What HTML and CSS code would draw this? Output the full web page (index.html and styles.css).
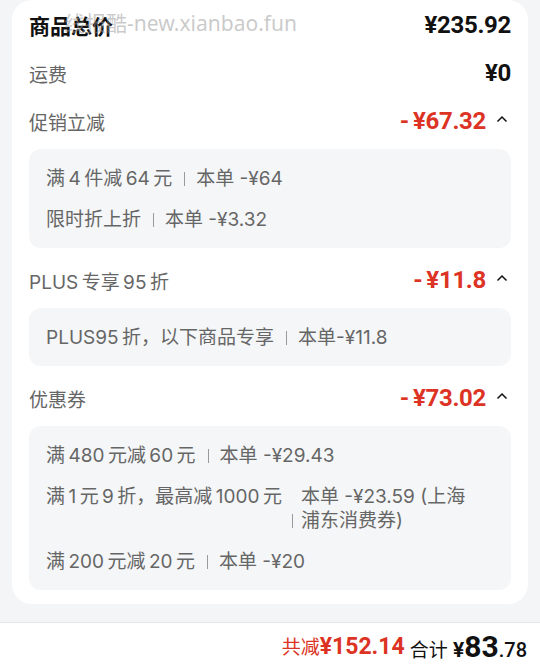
FILE: index.html
```html
<!DOCTYPE html>
<html lang="zh-CN">
<head>
<meta charset="utf-8">
<link rel="stylesheet" href="styles.css">
</head>
<body>
<div class="page">
  <div class="card">
    <div class="watermark">线报酷-new.xianbao.fun</div>
    <div class="row">
      <span class="title">商品总价</span>
      <span class="amt black">¥235.92</span>
    </div>
    <div class="row">
      <span class="label">运费</span>
      <span class="amt black">¥0</span>
    </div>

    <div class="row">
      <span class="label">促销立减</span>
      <span class="right"><span class="amt red"><span class="minus">-</span>¥67.32</span><svg class="chev" width="12" height="8" viewBox="0 0 12 8"><path d="M1.5 6.5 L6 2 L10.5 6.5" fill="none" stroke="#111" stroke-width="1.5"/></svg></span>
    </div>
    <div class="box">
      <div class="item"><span class="l">满&#8201;4&#8201;件减&#8201;64&#8201;元</span><span class="sep"></span><span class="r">本单 -¥64</span></div>
      <div class="item"><span class="l">限时折上折</span><span class="sep"></span><span class="r">本单 -¥3.32</span></div>
    </div>

    <div class="row">
      <span class="label">PLUS&#8201;专享&#8201;95&#8201;折</span>
      <span class="right"><span class="amt red"><span class="minus">-</span>¥11.8</span><svg class="chev" width="12" height="8" viewBox="0 0 12 8"><path d="M1.5 6.5 L6 2 L10.5 6.5" fill="none" stroke="#111" stroke-width="1.5"/></svg></span>
    </div>
    <div class="box">
      <div class="item"><span class="l">PLUS95&#8201;折，以下商品专享</span><span class="sep"></span><span class="r">本单-¥11.8</span></div>
    </div>

    <div class="row">
      <span class="label">优惠券</span>
      <span class="right"><span class="amt red"><span class="minus">-</span>¥73.02</span><svg class="chev" width="12" height="8" viewBox="0 0 12 8"><path d="M1.5 6.5 L6 2 L10.5 6.5" fill="none" stroke="#111" stroke-width="1.5"/></svg></span>
    </div>
    <div class="box">
      <div class="item"><span class="l">满&#8201;480&#8201;元减&#8201;60&#8201;元</span><span class="sep"></span><span class="r">本单 -¥29.43</span></div>
      <div class="item wrap"><span class="l">满&#8201;1&#8201;元&#8201;9&#8201;折，最高减&#8201;1000&#8201;元</span><span class="sep"></span><span class="r">本单 -¥23.59 (上海浦东消费券)</span></div>
      <div class="item"><span class="l">满&#8201;200&#8201;元减&#8201;20&#8201;元</span><span class="sep"></span><span class="r">本单 -¥20</span></div>
    </div>
  </div>
  <div class="footer">
    <span class="save">共减<b>¥152.14</b></span>
    <span class="total">合计 <span class="yen">¥</span><span class="big">83</span><span class="dec">.78</span></span>
  </div>
</div>
</body>
</html>
```

FILE: styles.css
```css
* { box-sizing: border-box; }
html, body { margin: 0; padding: 0; }
body {
  background: #f4f5f7;
  font-family: Inter, "Noto Sans CJK SC", sans-serif;
  width: 540px;
  height: 669px;
  overflow: hidden;
}
.page {
  display: flex;
  flex-direction: column;
  height: 669px;
}
.card {
  position: relative;
  margin: 0 12px;
  background: #fff;
  border-radius: 20px;
  padding: 1px 17px 14px;
}
.watermark {
  position: absolute;
  left: 52px;
  top: 8px;
  font-family: "Noto Sans", "Noto Sans CJK SC", sans-serif;
  font-size: 21px;
  line-height: 30px;
  color: rgba(150, 150, 150, 0.5);
  pointer-events: none;
}
.row {
  height: 48px;
  display: flex;
  align-items: center;
  justify-content: space-between;
}
.title {
  font-size: 21px;
  font-weight: 700;
  color: #111;
}
.label {
  font-size: 19px;
  color: #666;
}
.amt {
  font-family: Roboto, "Noto Sans", sans-serif;
  font-weight: 700;
  font-size: 24px;
  letter-spacing: -0.3px;
}
.black { color: #111; }
.red { color: #dc3324; }
.minus { margin-right: 4px; }
.right {
  display: flex;
  align-items: center;
}
.chev { margin-left: 10px; margin-right: 3px; margin-top: -4px; }
.box {
  background: #f5f6f8;
  border-radius: 12px;
  padding: 9px 17px 8px;
  margin: 4px 0 8px;
}
.box:last-child { margin-bottom: 0; }
.item {
  display: flex;
  align-items: center;
  padding: 8.5px 0;
  font-size: 19px;
  line-height: 24px;
  color: #666;
}
.item .l { flex: none; }
.sep {
  flex: none;
  width: 1px;
  height: 14px;
  background: #999;
  margin: 0 11px 0 12px;
}
.item.wrap { align-items: flex-start; }
.item.wrap .sep { align-self: flex-end; margin: 0 8px 5px 10px; }
.item .r { flex: 1 1 auto; min-width: 0; }
.item.wrap .r { padding-right: 12px; }
.footer {
  margin-top: auto;
  height: 47px;
  background: #fff;
  border-top: 1px solid #e6e7ea;
  display: flex;
  align-items: center;
  justify-content: flex-end;
  padding-right: 13px;
  gap: 5px;
}
.save {
  color: #dc3324;
  font-size: 19px;
}
.save b {
  font-family: Roboto, "Noto Sans", sans-serif;
  font-weight: 700;
  font-size: 23px;
}
.total {
  color: #111;
  font-size: 19px;
}
.total .yen {
  font-family: Roboto, sans-serif;
  font-weight: 700;
  font-size: 21px;
}
.total .big {
  font-family: Roboto, sans-serif;
  font-weight: 700;
  font-size: 30px;
}
.total .dec {
  font-family: Roboto, sans-serif;
  font-weight: 500;
  font-size: 20px;
}
```
